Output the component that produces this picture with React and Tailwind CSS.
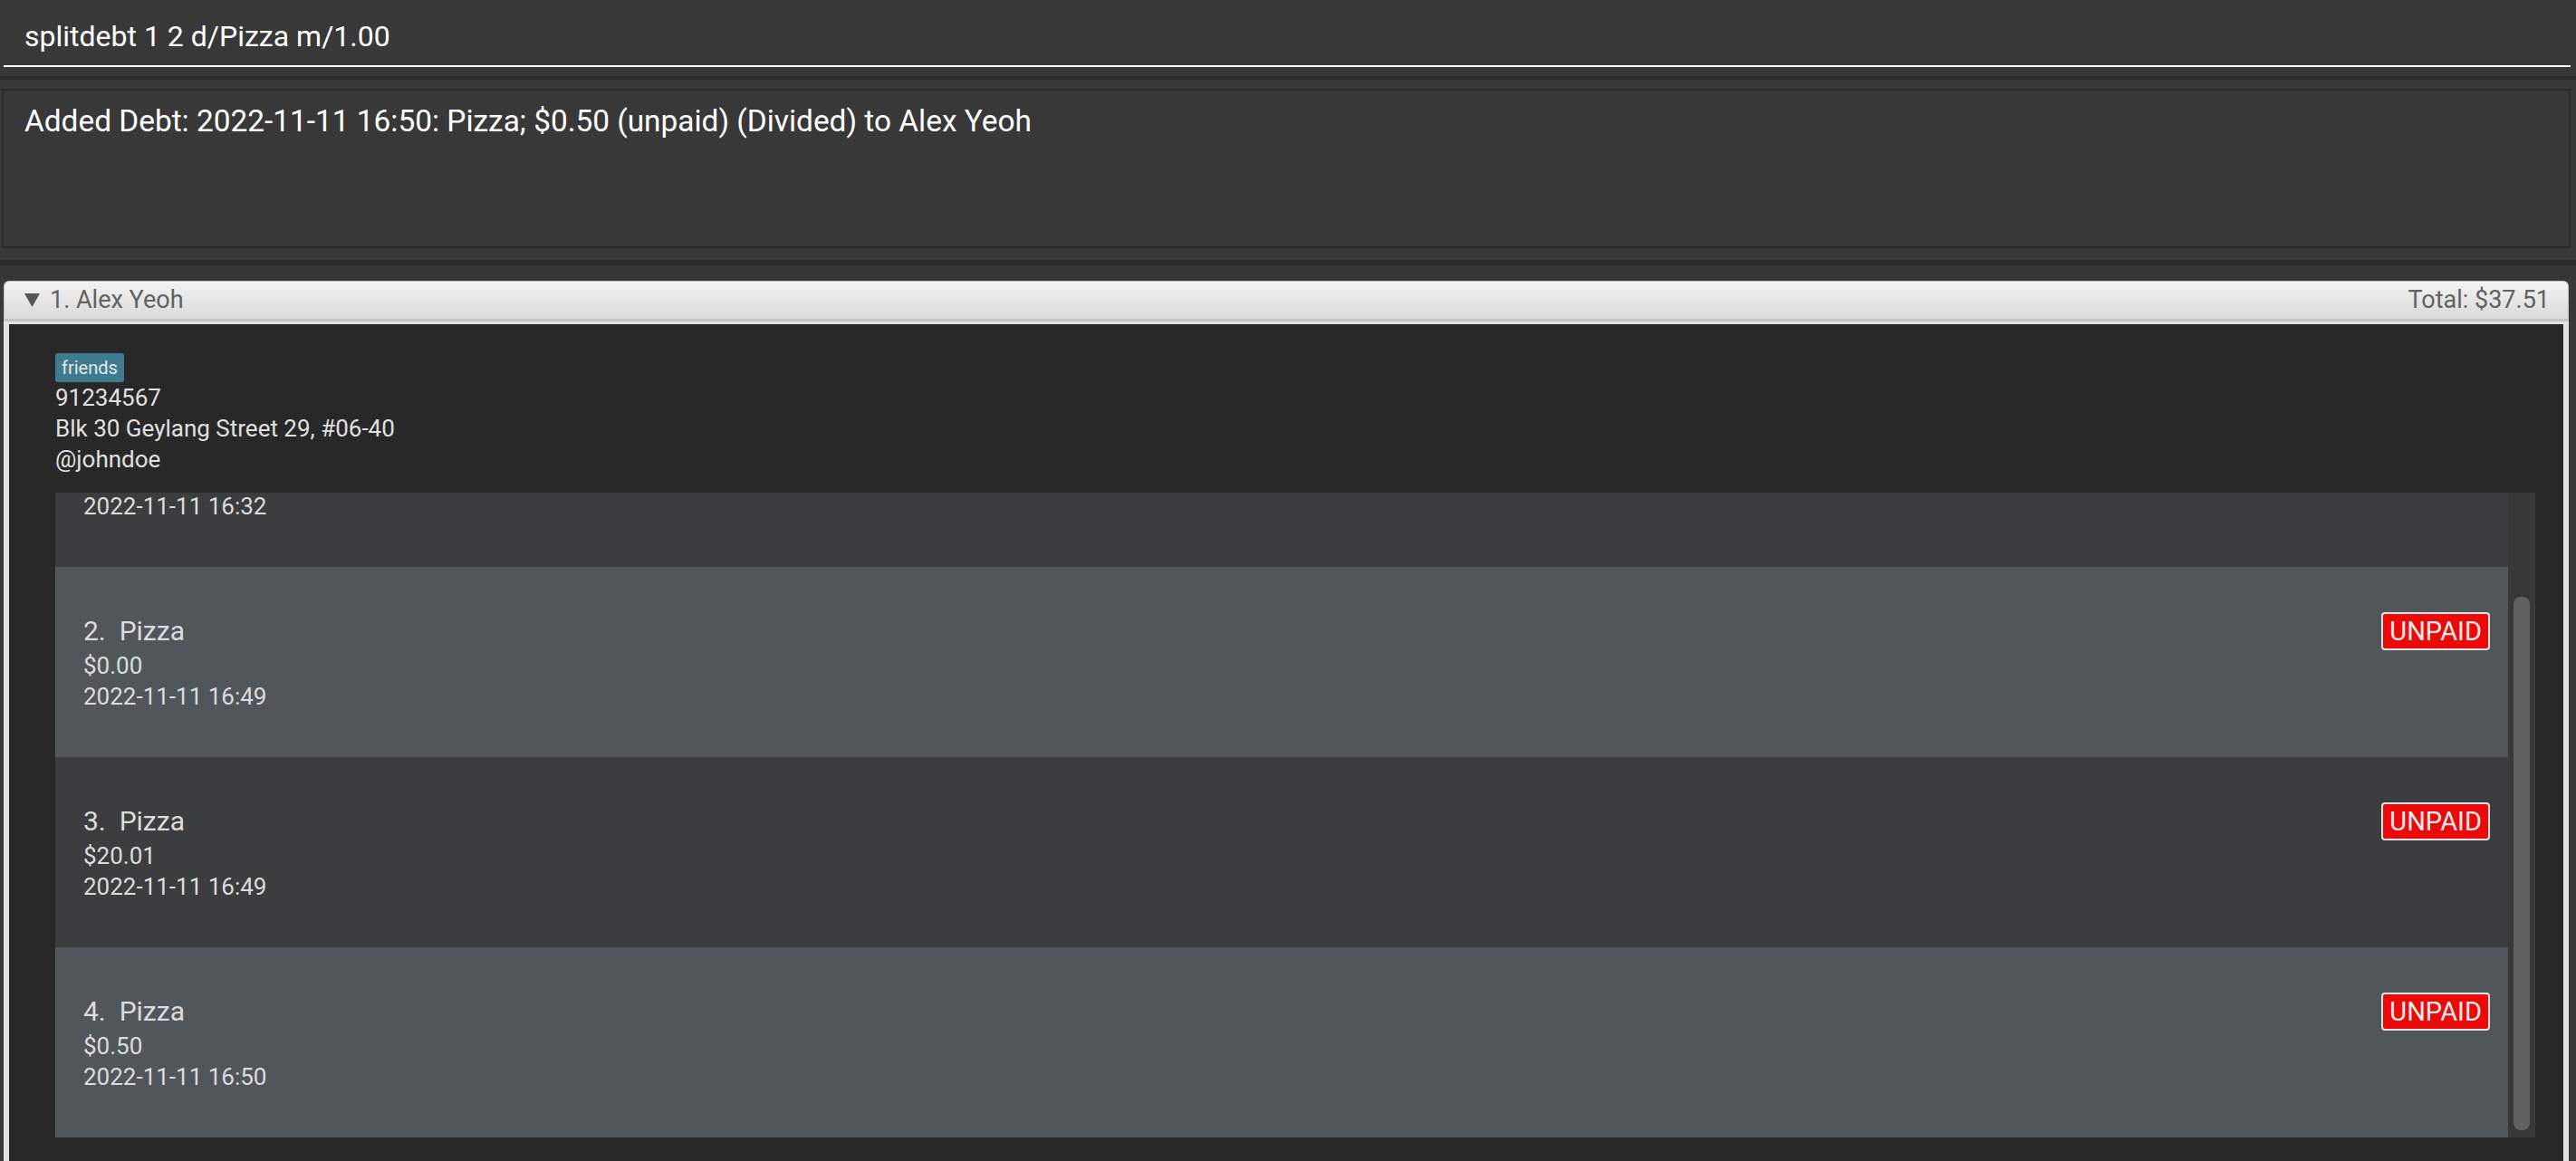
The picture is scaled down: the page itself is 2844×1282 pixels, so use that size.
import React from 'react';

const debts = [
  { id: 1, desc: 'Pizza', amount: '$17.00', date: '2022-11-11 16:32' },
  { id: 2, desc: 'Pizza', amount: '$0.00', date: '2022-11-11 16:49' },
  { id: 3, desc: 'Pizza', amount: '$20.01', date: '2022-11-11 16:49' },
  { id: 4, desc: 'Pizza', amount: '$0.50', date: '2022-11-11 16:50' },
];

function DebtCard({ debt, first }) {
  const even = debt.id % 2 === 0;
  return (
    <div
      className={`h-[210px] shrink-0 flex flex-col justify-center pl-[31px] pr-[20px] text-[#dcdcdc] ${
        even ? 'bg-[#51565a]' : 'bg-[#3c3d3f]'
      } ${first ? '-mt-[128px]' : ''}`}
    >
      <div className="flex items-center justify-between h-[42px]">
        <span className="text-[30px] leading-[36px] whitespace-pre">{`${debt.id}.  ${debt.desc}`}</span>
        <span className="h-[42px] px-[7px] flex items-center rounded-[4px] border-2 border-[#e4e4e4] bg-[#ec0909] text-[#ececec] text-[29px] leading-[38px]">
          UNPAID
        </span>
      </div>
      <div className="text-[26px] leading-[34px]">{debt.amount}</div>
      <div className="text-[26px] leading-[34px]">{debt.date}</div>
    </div>
  );
}

export default function App() {
  return (
    <div
      className="w-[2844px] h-[1282px] overflow-hidden bg-[#383838] flex flex-col"
      style={{ fontFamily: 'Roboto, "Liberation Sans", sans-serif' }}
    >
      {/* command box */}
      <div className="h-[84px] shrink-0 pt-[20px] ml-[4px] mr-[6px]">
        <div className="h-[54px] border-b-2 border-white pl-[23px] text-white text-[32px] leading-[40px]">
          splitdebt 1 2 d/Pizza m/1.00
        </div>
      </div>
      <div className="h-[4px] shrink-0 bg-[#2b2b2b]" />

      {/* result display */}
      <div className="h-[199px] shrink-0 pt-[10px] ml-[2px] mr-[6px]">
        <div className="h-[176px] border-2 border-[#2b2b2b] pt-[13px] pl-[23px] text-white text-[33.4px] leading-[42px]">
          Added Debt: 2022-11-11 16:50: Pizza; $0.50 (unpaid) (Divided) to Alex Yeoh
        </div>
      </div>
      <div className="h-[6px] shrink-0 bg-[#2b2b2b]" />
      <div className="h-[17px] shrink-0 bg-[#353535]" />

      {/* person card */}
      <div className="flex-1 flex flex-col ml-[4px] mr-[8px] min-h-0">
        <div className="h-[45px] shrink-0 flex items-center justify-between rounded-t-[6px] border border-b-[3px] border-[#c4c4c4] bg-gradient-to-b from-[#f3f3f3] to-[#dadada] pl-[22px] pr-[20px] text-[#626262] text-[27px]">
          <div className="flex items-center">
            <svg width="17" height="15" viewBox="0 0 17 15" className="mr-[11px]">
              <polygon points="0,0 17,0 8.5,15" fill="#555555" />
            </svg>
            <span>1. Alex Yeoh</span>
          </div>
          <span>Total: $37.51</span>
        </div>
        <div className="flex-1 border-x-[6px] border-t-[3px] border-[#e2e2e2] bg-[#282828] pt-[32px] pl-[51px] pr-[31px] min-h-0">
          <div className="flex">
            <span className="h-[32px] px-[7px] rounded-[3px] bg-[#3e7b91] text-[#e6e6e6] text-[20px] leading-[32px]">
              friends
            </span>
          </div>
          <div className="text-[#e0e0e0] text-[26px] leading-[34px]">
            <div>91234567</div>
            <div>Blk 30 Geylang Street 29, #06-40</div>
            <div>@johndoe</div>
          </div>
          <div className="mt-[20px] h-[712px] flex">
            <div className="flex-1 flex flex-col overflow-hidden">
              {debts.map((d, i) => (
                <DebtCard key={d.id} debt={d} first={i === 0} />
              ))}
            </div>
            <div className="w-[30px] bg-[#383838] pt-[115px] px-[6px]">
              <div className="h-[589px] rounded-[8px] bg-[#616161]" />
            </div>
          </div>
        </div>
      </div>
    </div>
  );
}
